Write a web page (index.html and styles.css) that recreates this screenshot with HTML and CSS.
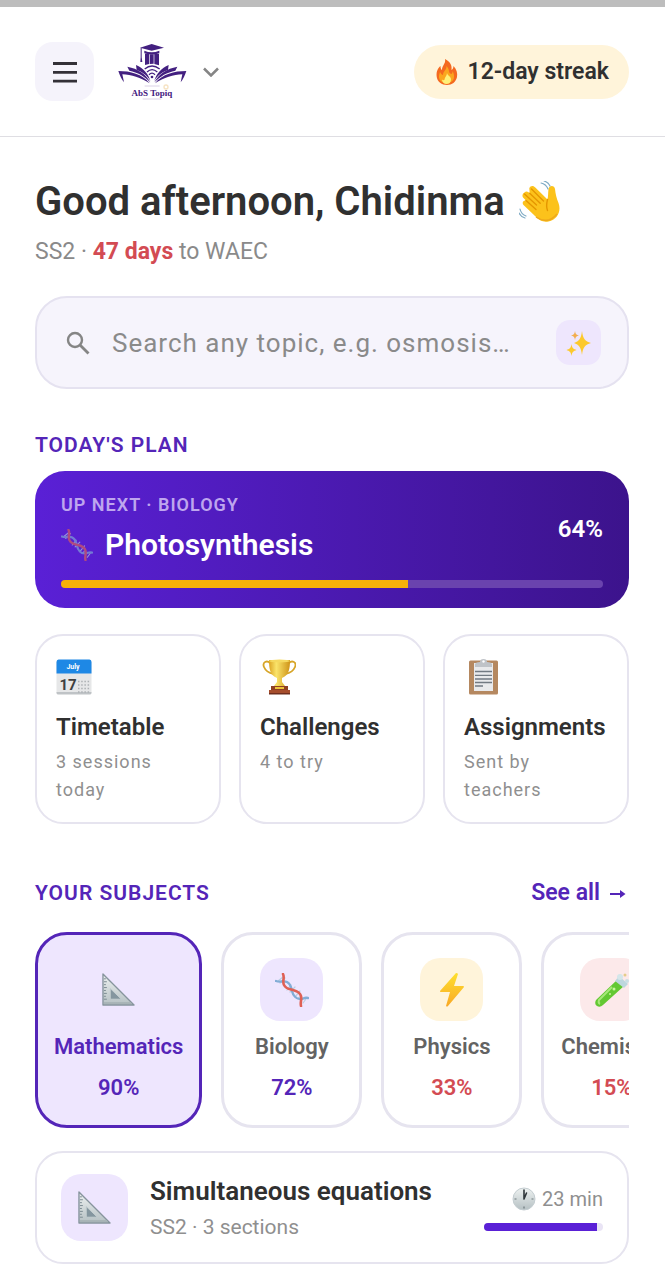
FILE: index.html
```html
<!DOCTYPE html>
<html lang="en">
<head>
  <meta charset="UTF-8">
  <meta name="viewport" content="width=device-width, initial-scale=1.0">
  <title>AbS Topiq</title>
  <link rel="stylesheet" href="styles.css">
</head>
<body>
  <!-- Shared icons -->
  <svg class="sprite" aria-hidden="true">
    <defs>
      <linearGradient id="steel" x1="0" y1="0" x2="0" y2="1">
        <stop offset="0" stop-color="#eef2f1"/>
        <stop offset="1" stop-color="#b5c0c3"/>
      </linearGradient>
      <linearGradient id="bolt" x1="0" y1="0" x2="0" y2="1">
        <stop offset="0" stop-color="#fee02f"/>
        <stop offset="1" stop-color="#f9a825"/>
      </linearGradient>
      <linearGradient id="gold" x1="0" y1="0" x2="1" y2="0">
        <stop offset="0" stop-color="#dca524"/>
        <stop offset=".35" stop-color="#fae46a"/>
        <stop offset="1" stop-color="#cf9418"/>
      </linearGradient>
    </defs>
    <symbol id="icon-ruler" viewBox="0 0 34 34">
      <path d="M1 1v32h32z" fill="url(#steel)" stroke="#86949d" stroke-width="1.4" stroke-linejoin="round"/>
      <path d="M8.500 16v11H20z" fill="#84969f" stroke="#c3cdcf" stroke-width="1"/>
      <path d="M2 6h2M2 9h3M2 12h2M2 15h3M2 18h2M2 21h3M2 24h2M2 27h3" stroke="#7b8a92" stroke-width="1"/>
      <path d="M2 31h28" stroke="#a7b3b6" stroke-width="2"/>
    </symbol>
    <symbol id="icon-dna" viewBox="0 0 34 34">
      <g fill="none" stroke-linecap="round">
        <path d="M3 8l5-4M5 10l5-5M12 17l4-5M15 19l5-5M20 24l5-6M23 26l3-4M28 30l3-4" stroke="#b9cfe2" stroke-width="1.200"/>
        <path d="M1 8c5 2 7-1 11 1s4 5 5 9 4 8 8 8 4-2 8-1" stroke="#82add6" stroke-width="2.400"/>
        <path d="M8 1c2 4-1 7 1 11s5 4 9 5 7 2 8 6-1 6 0 10" stroke="#df6054" stroke-width="2.600"/>
      </g>
    </symbol>
  </svg>

  <header class="topbar">
    <button class="menu-btn" type="button" aria-label="Menu">
      <svg viewBox="0 0 24 22" width="24" height="22">
        <path d="M0 2.500h24M0 11.300h24M0 20.200h24" stroke="#333037" stroke-width="2.800"/>
      </svg>
    </button>
    <button class="brand" type="button" aria-label="AbS Topiq">
      <svg viewBox="0 0 210 174" width="70" height="58">
        <g fill="#432080">
          <path d="M69 14l35-11 37 11-37 9z"/>
          <path d="M82 23q22 9 45 0v8q-22 7-45 0z"/>
          <path d="M84 32h12v31l-12 3zM98 34h12v28q-6 0-12 1zM112 33h14v34l-14-4z"/>
          <path d="M71 15h3v28l2 14h-6l1-14z"/>
          <path d="M4 84c36 0 72 9 94 37-27-18-55-25-82-27l5 24q-10-12-17-34z"/>
          <path d="M31 71c32 6 56 22 69 47-18-19-38-30-63-35z"/>
          <path d="M57 66c22 9 37 27 43 47-12-18-26-27-41-32z"/>
          <path d="M208 84c-36 0-72 9-94 37 27-18 55-25 82-27l-5 24q10-12 17-34z"/>
          <path d="M181 71c-32 6-56 22-69 47 18-19 38-30 63-35z"/>
          <path d="M155 66c-22 9-37 27-43 47 12-18 26-27 41-32z"/>
        </g>
        <g fill="none" stroke="#432080" stroke-width="4">
          <path d="M96 95q9-9 18 0M90 87q15-14 31 0M83 78q22-18 45 0"/>
        </g>
        <circle cx="105" cy="102" r="4" fill="#432080"/>
        <path d="M83 129h45M77 168h56" stroke="#c9bdd9" stroke-width="2"/>
        <circle cx="147" cy="132" r="6" fill="none" stroke="#f6e3c3" stroke-width="4"/>
        <text class="brand-name" x="105" y="158" text-anchor="middle">AbS Topiq</text>
      </svg>
      <svg viewBox="0 0 16 10" width="16" height="10">
        <path d="M1 1.500l7 7 7-7" fill="none" stroke="#858585" stroke-width="2.500"/>
      </svg>
    </button>
    <div class="streak">
      <svg viewBox="0 0 22 26" width="22" height="26" aria-hidden="true">
        <path d="M9 0c6 3 7 7 6.500 11 1.500-1 2-2.500 2-4 3 3 4.300 7 3.500 11-1 5-5 8-10 8S1 23 .600 17C.300 12 2 9 4.500 7c0 2 .5 3.500 1.500 4C6 6 10 5 9 0z" fill="#f4691f"/>
        <path d="M10.500 7c4 4 1 7 5 8 1-1 1-2 1-3 3 5 2 12-5.500 12S1.500 19 4 13c1 2 2 3 3 3 0-4 4-5 3.500-9z" fill="#fba51e"/>
        <path d="M11 14c.5 3 4 3 4 6.500 0 3-2 4.500-4.500 4.500S6 23 6 20.500c1 .8 2 .8 2.500.3C8.500 18 11 17 11 14z" fill="#fff07a"/>
      </svg>
      <span>12-day streak</span>
    </div>
  </header>

  <main class="content">
    <h1 class="greeting">
      Good afternoon, Chidinma
      <svg viewBox="0 0 42 42" width="42" height="42" aria-hidden="true">
        <path d="M5.500 11.500c1.800-2 4-.6 5.200.8l-.4-5c1-3 4.300-3 6-.8l12.200 12c.8-3 .5-7 1-10.500.7-4 6-4 6.500 0 .5 5 1.500 9 3.500 14 3 8-1 17-10 18.500-6 1-10-2-14-6L4.500 24c-2-2.500 0-5 2.500-4.500L4.500 17c-2-2-.8-4.500 1-5.500z" fill="#fcc21b"/>
        <path d="M28.500 18.500c-1 4-1.500 7 0 11M10.700 12.300l10.500 10M7 19.500l10 9M5.500 13l12 11M12.500 8l12 12" fill="none" stroke="#e59600" stroke-width="1.400" stroke-linecap="round"/>
        <path d="M17 36q12 8 21-3" fill="none" stroke="#eea91c" stroke-width="1.500"/>
        <path d="M22 2q5 1 7 6M25 0q4 1 6 5M1 28q1 5 6 7M0 32q2 4 6 5" fill="none" stroke="#7eaac4" stroke-width="1.200" stroke-linecap="round"/>
      </svg>
    </h1>
    <p class="subtitle">SS2 · <strong>47 days</strong> to WAEC</p>

    <form class="search">
      <svg viewBox="0 0 24 24" width="24" height="24" aria-hidden="true">
        <circle cx="9" cy="9" r="7" fill="none" stroke="#858585" stroke-width="2.400"/>
        <path d="M14 14l8.500 8.500" stroke="#858585" stroke-width="2.800"/>
      </svg>
      <input type="text" aria-label="Search topics" placeholder="Search any topic, e.g. osmosis…">
      <button class="spark-btn" type="button" aria-label="Ask AI">
        <svg viewBox="0 0 26 26" width="26" height="26">
          <path d="M16 1c1 8 3 10 9 12-6 2-8 4-9 12-1-8-3-10-8-12 5-2 7-4 8-12z" fill="#fcc92d"/>
          <path d="M5.500 14c.5 4 2 5 5 6-3 1-4.500 2-5 6-.5-4-2-5-5-6 3-1 4.500-2 5-6z" fill="#fcc92d"/>
          <path d="M9 1c.4 3 1.500 4 4 4.500C10.500 6 9.400 7 9 10c-.4-3-1.500-4-4-4.500C7.500 5 8.600 4 9 1z" fill="#f2ad4e"/>
        </svg>
      </button>
    </form>

    <section class="plan">
      <h2 class="section-title">TODAY'S PLAN</h2>
      <a class="up-next" href="#">
        <div class="up-next-row">
          <div>
            <div class="up-next-label">UP NEXT · BIOLOGY</div>
            <div class="up-next-topic">
              <svg class="dna-dim" width="32" height="32" aria-hidden="true"><use href="#icon-dna"/></svg>
              <span>Photosynthesis</span>
            </div>
          </div>
          <div class="up-next-percent">64%</div>
        </div>
        <div class="progress"><div class="progress-fill" style="width: 64%"></div></div>
      </a>

      <div class="tiles">
        <a class="tile" href="#">
          <svg viewBox="0 0 36 36" width="36" height="36" aria-hidden="true">
            <rect x=".5" y="1" width="35" height="34" rx="2" fill="#e6e7e8"/>
            <path d="M.5 34v-1h35v1q0 1.500-2 1.500h-31q-2 0-2-1.500z" fill="#bfc3c6"/>
            <path d="M.5 14.500V3q0-2.500 2-2.500h31q2 0 2 2.500v11.500z" fill="#1e88e5"/>
            <text class="cal-month" x="17" y="10" text-anchor="middle">July</text>
            <text class="cal-day" x="12" y="31" text-anchor="middle">17</text>
            <path d="M22 22.500h12M22 26h12M22 29.500h12M22 33h12" stroke="#adb1b4" stroke-width="1.500" stroke-dasharray="1.500 1.700"/>
          </svg>
          <h3>Timetable</h3>
          <p>3 sessions today</p>
        </a>
        <a class="tile" href="#">
          <svg viewBox="0 0 36 36" width="36" height="36" aria-hidden="true">
            <path d="M10 4C7 1 2 3 4 8q2 5 9 7M29 4c3-3 8-1 6 4q-2 5-9 7" fill="none" stroke="#d7a528" stroke-width="1.800"/>
            <path d="M9 1h21c0 9-1 15-8 18v4l3 4H14l3-4v-4C10 16 9 10 9 1z" fill="url(#gold)"/>
            <ellipse cx="19.500" cy="2" rx="10.500" ry="1.500" fill="#f5d95f"/>
            <path d="M11 27h17v4H11z" fill="#8e4023"/>
            <path d="M15 28h9v2h-9z" fill="#efc338"/>
            <path d="M9 31h21v4H9z" fill="#a64d2c"/>
            <path d="M9 34h21v1.500H9z" fill="#6f2e1d"/>
          </svg>
          <h3>Challenges</h3>
          <p>4 to try</p>
        </a>
        <a class="tile" href="#">
          <svg viewBox="0 0 36 36" width="36" height="36" aria-hidden="true">
            <rect x="5" y="1.500" width="29" height="34" rx="1.500" fill="#b58860"/>
            <path d="M10 4h19v28H10z" fill="#e9eaec"/>
            <path d="M11 8V5q1-2 5-2 0-3 3.500-3T23 3q4 0 5 2v3z" fill="#bfc3c8"/>
            <circle cx="19.500" cy="2.500" r="1.200" fill="#fff"/>
            <path d="M11 12.500h17M11 16.300h17M11 20h17M11 23.500h17M11 27h8" stroke="#727a82" stroke-width="1.300"/>
          </svg>
          <h3>Assignments</h3>
          <p>Sent by teachers</p>
        </a>
      </div>
    </section>

    <section class="subjects">
      <div class="subjects-head">
        <h2 class="section-title">YOUR SUBJECTS</h2>
        <a class="see-all" href="#">See all
          <svg viewBox="0 0 16 12" width="16" height="12" aria-hidden="true">
            <path d="M0 7h13" fill="none" stroke="#5425b8" stroke-width="2"/>
            <path d="M10 3l5.500 4-5.500 4z" fill="#5425b8"/>
          </svg>
        </a>
      </div>
      <div class="subject-list">
        <button class="subject active" type="button">
          <span class="subject-icon lilac"><svg width="33" height="33" aria-hidden="true"><use href="#icon-ruler"/></svg></span>
          <span class="subject-name">Mathematics</span>
          <span class="subject-score">90%</span>
        </button>
        <button class="subject" type="button">
          <span class="subject-icon lilac"><svg width="34" height="34" aria-hidden="true"><use href="#icon-dna"/></svg></span>
          <span class="subject-name">Biology</span>
          <span class="subject-score">72%</span>
        </button>
        <button class="subject" type="button">
          <span class="subject-icon cream">
            <svg viewBox="0 0 34 34" width="34" height="34" aria-hidden="true">
              <path d="M21 0L5 18q-.5 1 1 1h9l-4 14q1 1 2 0l16-19q0-1-1-1h-9l4-12q-.5-1-2-1z" fill="url(#bolt)"/>
            </svg>
          </span>
          <span class="subject-name">Physics</span>
          <span class="subject-score low">33%</span>
        </button>
        <button class="subject" type="button">
          <span class="subject-icon rose">
            <svg viewBox="0 0 34 34" width="34" height="34" aria-hidden="true">
              <path d="M22 7L1 27q-2 4 1 6t6-1L29 13z" fill="#63c832"/>
              <path d="M17 14L4 27q-1 3 1 4" fill="none" stroke="#a6e878" stroke-width="2"/>
              <path d="M20 8l4-5 9 8-4 4z" fill="#bdd7dd"/>
              <circle cx="19" cy="16" r="1.500" fill="#c8f59d"/>
              <circle cx="15" cy="21" r="1" fill="#c8f59d"/>
              <circle cx="25" cy="4" r="3" fill="#d4e6ea"/>
              <circle cx="30" cy="2" r="1.500" fill="#e5cc8a"/>
              <circle cx="32" cy="8" r="2" fill="#cadfe5"/>
            </svg>
          </span>
          <span class="subject-name">Chemistry</span>
          <span class="subject-score low">15%</span>
        </button>
      </div>

      <a class="topic" href="#">
        <span class="topic-icon"><svg width="33" height="33" aria-hidden="true"><use href="#icon-ruler"/></svg></span>
        <div class="topic-text">
          <h3>Simultaneous equations</h3>
          <p>SS2 · 3 sections</p>
        </div>
        <div class="topic-meta">
          <div class="topic-time">
            <svg viewBox="0 0 24 24" width="24" height="24" aria-hidden="true">
              <circle cx="12" cy="12" r="11" fill="url(#steel)" stroke="#c4cdd1"/>
              <path d="M12 12V3M12 12l2.500-6" stroke="#30373b" stroke-width="1.600" stroke-linecap="round"/>
              <path d="M12 19.500v2M2.500 12h2M19.500 12h2" stroke="#6d777c" stroke-width="1.200"/>
            </svg>
            <span>23 min</span>
          </div>
          <div class="topic-progress"><div class="topic-progress-fill" style="width: 95%"></div></div>
        </div>
      </a>
    </section>
  </main>
</body>
</html>
```
FILE: styles.css
```css
* {
  margin: 0;
  padding: 0;
  box-sizing: border-box;
}

body {
  font-family: Roboto, 'Liberation Sans', sans-serif;
  color: #303030;
  background: #fff;
  border-top: 7px solid #bdbdbd;
}

a {
  color: inherit;
  text-decoration: none;
}

button {
  font: inherit;
  border: none;
  background: none;
  cursor: pointer;
}

svg {
  display: block;
  flex-shrink: 0;
}

.sprite {
  position: absolute;
  width: 0;
  height: 0;
}

/* Top bar */
.topbar {
  display: flex;
  align-items: center;
  padding: 35px 36px 35px 35px;
  border-bottom: 1px solid #dfdee3;
}

.menu-btn {
  display: flex;
  align-items: center;
  justify-content: center;
  width: 59px;
  height: 59px;
  border-radius: 18px;
  background: #f5f3fb;
}

.brand {
  display: flex;
  align-items: center;
  gap: 16px;
  margin-left: 23px;
}

.brand-name {
  font-family: 'Liberation Serif', serif;
  font-size: 27px;
  font-weight: 700;
  fill: #432080;
}

.streak {
  display: flex;
  align-items: center;
  gap: 10px;
  height: 54px;
  margin-left: auto;
  padding: 0 20px 0 22px;
  border-radius: 27px;
  background: #fff4da;
  font-size: 23px;
  font-weight: 600;
}

/* Greeting */
.content {
  padding: 41px 36px 16px 35px;
}

.greeting {
  display: flex;
  align-items: center;
  gap: 14px;
  font-size: 40px;
  font-weight: 600;
  line-height: 48px;
}

.subtitle {
  margin-top: 11px;
  font-size: 23px;
  line-height: 30px;
  color: #8a8a8a;
}

.subtitle strong {
  color: #d34b53;
  font-weight: 700;
}

/* Search */
.search {
  display: flex;
  align-items: center;
  gap: 22px;
  height: 93px;
  margin-top: 29px;
  padding: 0 26px 0 29px;
  border: 2px solid #e5e2f0;
  border-radius: 32px;
  background: #f6f4fc;
}

.search input {
  flex: 1;
  min-width: 0;
  border: none;
  outline: none;
  background: transparent;
  font: inherit;
  font-size: 26px;
  letter-spacing: 1px;
  color: #303030;
}

.search input::placeholder {
  color: #8a8a8a;
}

.spark-btn {
  display: flex;
  align-items: center;
  justify-content: center;
  width: 45px;
  height: 45px;
  border-radius: 14px;
  background: #eee6fd;
}

/* Today's plan */
.section-title {
  font-size: 21px;
  font-weight: 600;
  line-height: 24px;
  letter-spacing: 1px;
  color: #5425b8;
}

.plan {
  margin-top: 44px;
}

.up-next {
  display: block;
  margin-top: 14px;
  padding: 22px 26px 20px;
  border-radius: 30px;
  background: linear-gradient(90deg, #5a20d6, #3c138c);
  color: #fff;
}

.up-next-row {
  display: flex;
  align-items: center;
  justify-content: space-between;
}

.up-next-label {
  font-size: 18px;
  font-weight: 600;
  line-height: 24px;
  letter-spacing: 1px;
  color: #bea6ee;
}

.up-next-topic {
  display: flex;
  align-items: center;
  gap: 12px;
  margin-top: 8px;
  font-size: 30px;
  font-weight: 600;
  line-height: 40px;
}

.dna-dim {
  opacity: 0.65;
}

.up-next-percent {
  font-size: 24px;
  font-weight: 600;
}

.progress {
  height: 8px;
  margin-top: 15px;
  border-radius: 4px;
  background: #6a43ae;
  overflow: hidden;
}

.progress-fill {
  height: 100%;
  background: #f7b109;
}

.tiles {
  display: grid;
  grid-template-columns: repeat(3, 1fr);
  gap: 18px;
  margin-top: 26px;
}

.tile {
  padding: 23px 18px 18px 19px;
  border: 2px solid #e6e4ef;
  border-radius: 28px;
}

.tile h3 {
  margin-top: 17px;
  font-size: 24px;
  font-weight: 600;
  line-height: 30px;
}

.tile p {
  margin-top: 6px;
  font-size: 18px;
  line-height: 28px;
  letter-spacing: 1px;
  color: #8f8f8f;
}

/* Subjects */
.subjects {
  margin-top: 54px;
}

.subjects-head {
  display: flex;
  align-items: center;
  justify-content: space-between;
}

.see-all {
  display: flex;
  align-items: center;
  gap: 10px;
  padding-right: 3px;
  font-size: 23px;
  font-weight: 600;
  line-height: 30px;
  color: #5425b8;
}

.subject-list {
  display: flex;
  gap: 19px;
  margin-top: 24px;
  overflow: hidden;
}

.subject {
  display: flex;
  flex-direction: column;
  align-items: center;
  flex-shrink: 0;
  min-width: 141px;
  padding: 23px 16px;
  border: 3px solid #e6e4ef;
  border-radius: 32px;
  font-size: 22px;
  font-weight: 600;
  line-height: 28px;
}

.subject.active {
  border-color: #5425b8;
  background: #eee6fe;
}

.subject-icon {
  display: flex;
  align-items: center;
  justify-content: center;
  width: 63px;
  height: 63px;
  border-radius: 20px;
}

.lilac {
  background: #eee6fe;
}

.cream {
  background: #fff4da;
}

.rose {
  background: #fce9ea;
}

.subject-name {
  margin-top: 12px;
  color: #636363;
}

.active .subject-name {
  color: #5425b8;
}

.subject-score {
  margin-top: 13px;
  color: #5425b8;
}

.subject-score.low {
  color: #d34b53;
}

/* Topic row */
.topic {
  display: flex;
  align-items: center;
  gap: 22px;
  margin-top: 23px;
  padding: 21px 24px;
  border: 2px solid #e6e4ef;
  border-radius: 28px;
}

.topic-icon {
  display: flex;
  align-items: center;
  justify-content: center;
  width: 67px;
  height: 67px;
  border-radius: 20px;
  background: #eee6fe;
}

.topic-text {
  flex: 1;
}

.topic-text h3 {
  font-size: 26px;
  font-weight: 600;
  line-height: 32px;
}

.topic-text p {
  margin-top: 6px;
  font-size: 21px;
  line-height: 28px;
  color: #8f8f8f;
}

.topic-meta {
  width: 119px;
}

.topic-time {
  display: flex;
  align-items: center;
  justify-content: flex-end;
  gap: 6px;
  font-size: 20px;
  line-height: 28px;
  color: #8f8f8f;
}

.topic-progress {
  height: 8px;
  margin-top: 10px;
  border-radius: 4px;
  background: #e9e4f5;
  overflow: hidden;
}

.topic-progress-fill {
  height: 100%;
  background: #5a20d6;
}

/* Lettering on the calendar icon */
.cal-month {
  font-size: 7px;
  font-weight: 700;
  fill: #fff;
}

.cal-day {
  font-size: 15px;
  font-weight: 700;
  fill: #404040;
}
```
